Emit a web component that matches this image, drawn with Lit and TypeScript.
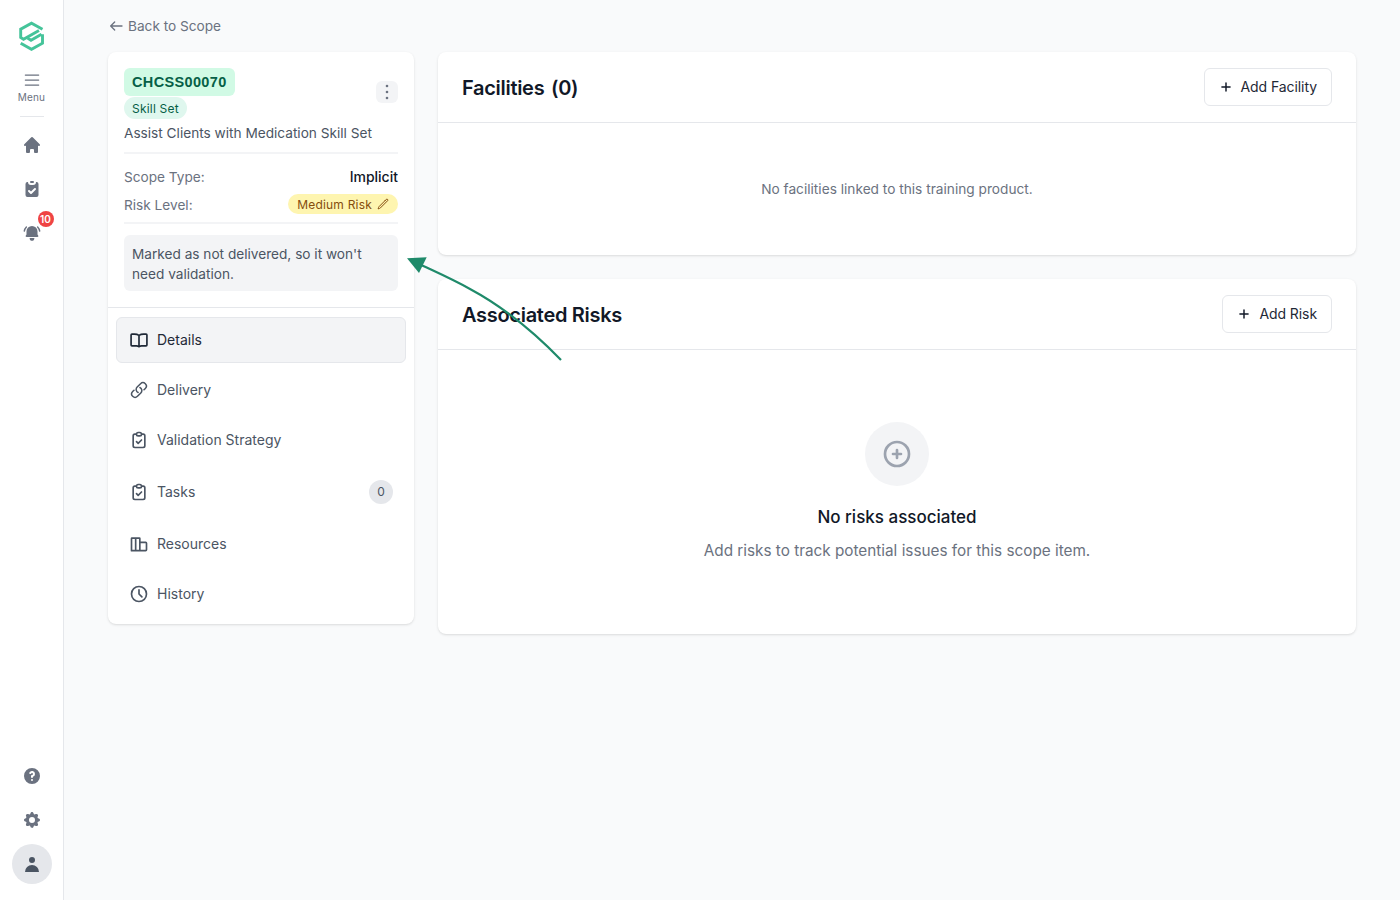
import { html, LitElement, css, svg } from 'lit';
import { customElement } from 'lit/decorators.js';

const solid = (paths: string[], size = 20) => html`<svg width=${size} height=${size} viewBox="0 0 20 20" fill="currentColor">
  ${paths.map((d) => svg`<path fill-rule="evenodd" clip-rule="evenodd" d=${d}></path>`)}
</svg>`;

const outline = (d: string, size = 20, width = 2) => html`<svg width=${size} height=${size} viewBox="0 0 24 24" fill="none" stroke="currentColor" stroke-width=${width} stroke-linecap="round" stroke-linejoin="round">
  <path d=${d}></path>
</svg>`;

const HOME = ['M10.707 2.293a1 1 0 00-1.414 0l-7 7a1 1 0 001.414 1.414L4 10.414V17a1 1 0 001 1h2a1 1 0 001-1v-2a1 1 0 011-1h2a1 1 0 011 1v2a1 1 0 001 1h2a1 1 0 001-1v-6.586l.293.293a1 1 0 001.414-1.414l-7-7z'];
const CLIP = ['M9 2a1 1 0 000 2h2a1 1 0 100-2H9z', 'M3.500 5a2 2 0 012-2H6a3 3 0 003 3h2a3 3 0 003-3h.5a2 2 0 012 2v11a2 2 0 01-2 2h-9a2 2 0 01-2-2V5zm10.207 5.707a1 1 0 00-1.414-1.414L9 12.586l-1.293-1.293a1 1 0 00-1.414 1.414l2 2a1 1 0 001.414 0l4-4z'];
const BELL = ['M10 3a5.5 5.5 0 00-5.5 5.5v3.1l-.7.9A1 1 0 004.6 14h10.8a1 1 0 00.8-1.5l-.7-.9V8.500A5.500 5.500 0 0010 3zM10 17.800a2.300 2.300 0 01-2.300-2.800h4.600a2.300 2.300 0 01-2.300 2.800z', 'M3.900 3.600a.7.7 0 011 1A7 7 0 003 8.200a.7.7 0 01-1.400-.2 8.400 8.400 0 012.300-4.400zM15.100 4.600a.7.7 0 011-1A8.400 8.400 0 0118.400 8a.7.7 0 01-1.400.2 7 7 0 00-1.900-3.600z'];
const HELP = ['M18 10a8 8 0 11-16 0 8 8 0 0116 0zm-8-3a1 1 0 00-.867.5 1 1 0 11-1.731-1A3 3 0 0113 8a3.001 3.001 0 01-2 2.830V11a1 1 0 11-2 0v-1a1 1 0 011-1 1 1 0 100-2zm0 8a1 1 0 100-2 1 1 0 000 2z'];
const COG = ['M11.490 3.170c-.380-1.560-2.600-1.560-2.980 0a1.532 1.532 0 01-2.286.948c-1.372-.836-2.942.734-2.106 2.106.540.886.061 2.042-.947 2.287-1.561.379-1.561 2.600 0 2.978a1.532 1.532 0 01.947 2.287c-.836 1.372.734 2.942 2.106 2.106a1.532 1.532 0 012.287.947c.379 1.561 2.600 1.561 2.978 0a1.533 1.533 0 012.287-.947c1.372.836 2.942-.734 2.106-2.106a1.533 1.533 0 01.947-2.287c1.561-.379 1.561-2.600 0-2.978a1.532 1.532 0 01-.947-2.287c.836-1.372-.734-2.942-2.106-2.106a1.532 1.532 0 01-2.287-.947zM10 13a3 3 0 100-6 3 3 0 000 6z'];
const USER = ['M10 9a3 3 0 100-6 3 3 0 000 6zm-7 9a7 7 0 1114 0H3z'];

const BOOK = 'M12 6.500C10.500 5.500 8.500 5 6.500 5H3.500a1 1 0 00-1 1v12a1 1 0 001 1h5.500c1.200 0 2.200.500 3 1m0-13.500C13.500 5.500 15.500 5 17.500 5h3a1 1 0 011 1v12a1 1 0 01-1 1H15c-1.200 0-2.200.500-3 1m0-13.500V20';
const LINK = 'M13.190 8.688a4.500 4.500 0 011.242 7.244l-4.500 4.500a4.500 4.500 0 01-6.364-6.364l1.757-1.757m13.350-.622l1.757-1.757a4.500 4.500 0 00-6.364-6.364l-4.500 4.500a4.500 4.500 0 001.242 7.244';
const CHECKLIST = 'M9 5H7a2 2 0 00-2 2v12a2 2 0 002 2h10a2 2 0 002-2V7a2 2 0 00-2-2h-2M9 5a2 2 0 002 2h2a2 2 0 002-2M9 5a2 2 0 012-2h2a2 2 0 012 2m-6 9l2 2 4-4';
const COLUMNS = 'M3 5.500A.500.500 0 013.500 5h4a.500.500 0 01.500.500V20H3zM8 5.500A.500.500 0 018.500 5h4a.500.500 0 01.500.500V20H8zM13 10h7a1 1 0 011 1v8a1 1 0 01-1 1h-7';
const CLOCK = 'M12 7v5l3.500 3.500M21 12a9 9 0 11-18 0 9 9 0 0118 0z';
const PLUS_CIRCLE = 'M12 9v3m0 0v3m0-3h3m-3 0H9m12 0a9 9 0 11-18 0 9 9 0 0118 0z';
const PENCIL = 'M16.862 4.487l1.687-1.688a1.875 1.875 0 112.652 2.652L6.832 19.820a4.500 4.500 0 01-1.897 1.130l-2.685.800.800-2.685a4.500 4.500 0 011.130-1.897L16.863 4.487z';
const PLUS = 'M12 5v14M5 12h14';

const NAV = [
  { label: 'Details', icon: BOOK, active: true },
  { label: 'Delivery', icon: LINK, size: 18 },
  { label: 'Validation Strategy', icon: CHECKLIST },
  { label: 'Tasks', icon: CHECKLIST, count: 0 },
  { label: 'Resources', icon: COLUMNS },
  { label: 'History', icon: CLOCK },
];

@customElement('app-root')
export class AppRoot extends LitElement {
  static styles = css`
    :host {
      display: block;
      height: 900px;
      overflow: hidden;
      position: relative;
      background: #f9fafb;
      color: #111827;
      font-family: Inter, 'Liberation Sans', sans-serif;
      font-size: 14px;
    }
    * { box-sizing: border-box; }

    .layout { display: flex; height: 100%; }

    .rail {
      width: 64px;
      flex: none;
      background: #fff;
      border-right: 1px solid #e5e7eb;
      display: flex;
      flex-direction: column;
      align-items: center;
      color: #6b7280;
    }
    .logo { margin-top: 20px; height: 32px; }
    .menu {
      margin-top: 18px;
      display: flex;
      flex-direction: column;
      align-items: center;
      font-size: 10px;
      line-height: 12px;
      letter-spacing: 0.2px;
    }
    .menu svg { display: block; margin-bottom: 1px; }
    .rail hr {
      width: 24px;
      margin: 13px 0 0;
      border: 0;
      border-top: 1px solid #e5e7eb;
    }
    .rail-links { margin-top: 18px; display: flex; flex-direction: column; gap: 24px; }
    .rail-links svg, .rail-foot svg { display: block; }
    .bell { position: relative; }
    .bell-count {
      position: absolute;
      top: -12px;
      left: 16px;
      width: 16px;
      height: 16px;
      border-radius: 50%;
      background: #ef4444;
      color: #fff;
      font-size: 10px;
      font-weight: 600;
      line-height: 16px;
      text-align: center;
    }
    .rail-foot {
      margin-top: auto;
      padding-bottom: 16px;
      display: flex;
      flex-direction: column;
      align-items: center;
      gap: 24px;
    }
    .avatar {
      width: 40px;
      height: 40px;
      margin-top: -10px;
      border-radius: 50%;
      background: #e5e7eb;
      color: #4b5563;
      display: flex;
      align-items: center;
      justify-content: center;
    }

    .main { flex: 1; padding: 16px 44px 0; min-width: 0; }
    .back {
      display: flex;
      align-items: center;
      gap: 4px;
      height: 20px;
      color: #6b7280;
      font-size: 13.65px;
    }
    .columns { display: flex; gap: 24px; margin-top: 16px; align-items: flex-start; }

    .card {
      background: #fff;
      border-radius: 8px;
      box-shadow: 0 1px 3px rgba(0, 0, 0, 0.1), 0 1px 2px -1px rgba(0, 0, 0, 0.1);
    }
    .side { width: 306px; flex: none; }
    .summary { padding: 16px; border-bottom: 1px solid #e5e7eb; }
    .summary-top { display: flex; align-items: center; justify-content: space-between; }
    .code {
      display: inline-block;
      padding: 4px 8px;
      border-radius: 6px;
      background: #d1fae5;
      color: #065f46;
      font-family: 'Liberation Sans', Arial, sans-serif;
      font-size: 14.5px;
      font-weight: 700;
      line-height: 20px;
      letter-spacing: 0.35px;
    }
    .kind {
      display: block;
      width: max-content;
      margin-top: 1px;
      padding: 1px 8px 0;
      height: 22px;
      line-height: 22px;
      border-radius: 11px;
      background: #dff7ee;
      color: #065f46;
      font-size: 12px;
      letter-spacing: 0.2px;
    }
    .more {
      width: 22px;
      height: 22px;
      margin-bottom: 3px;
      border-radius: 6px;
      background: #f3f4f6;
      color: #6b7280;
      display: flex;
      align-items: center;
      justify-content: center;
    }
    .title { margin-top: 4px; color: #4b5563; line-height: 20px; font-size: 13.65px; }
    .rule { border-top: 2px solid #f3f4f6; }
    .rule.first { margin-top: 9px; }
    .rule.second { margin-top: 8px; }
    .meta { display: flex; align-items: center; justify-content: space-between; color: #6b7280; font-size: 13.65px; }
    .meta-label { padding-top: 2px; }
    .meta strong { color: #111827; font-weight: 500; font-size: 14px; }
    .meta.scope { margin-top: 12px; height: 20px; }
    .meta.risk { margin-top: 8px; height: 20px; }
    .risk-pill {
      display: flex;
      align-items: center;
      gap: 5px;
      height: 20px;
      padding: 0 9px;
      border-radius: 10px;
      background: #fef5b0;
      color: #854d0e;
      font-size: 12px;
      letter-spacing: 0.2px;
    }
    .note {
      margin-top: 11px;
      padding: 9px 8px 7px;
      height: 56px;
      border-radius: 6px;
      background: #f3f4f6;
      color: #4b5563;
      line-height: 20px;
      font-size: 13.65px;
    }

    .nav { padding: 9px 8px 7px; display: flex; flex-direction: column; gap: 4px; }
    .nav-item {
      display: flex;
      align-items: center;
      gap: 8px;
      height: 46px;
      padding: 0 12px;
      border: 1px solid transparent;
      border-radius: 6px;
      color: #4b5563;
    }
    .nav-item.active { background: #f3f4f6; border-color: #e5e7eb; color: #1f2937; }
    .nav-item.counted { height: 50px; }
    .nav-item svg { flex: none; }
    .nav-icon { width: 20px; display: flex; justify-content: center; }
    .nav-label { padding-bottom: 2px; }
    .count {
      margin-left: auto;
      width: 24px;
      height: 24px;
      border-radius: 50%;
      background: #e5e7eb;
      font-size: 12px;
      line-height: 24px;
      text-align: center;
    }

    .content { flex: 1; min-width: 0; display: flex; flex-direction: column; gap: 24px; }
    .card-head {
      height: 71px;
      padding: 16px 24px;
      display: flex;
      align-items: center;
      justify-content: space-between;
      border-bottom: 1px solid #e5e7eb;
    }
    .card-head h2 { margin: 2px 0 0; font-size: 20px; font-weight: 600; line-height: 28px; letter-spacing: -0.3px; }
    .tally { margin-left: 2px; }
    .add {
      display: flex;
      align-items: center;
      gap: 8px;
      height: 38px;
      padding: 0 14px 2px;
      border: 1px solid #e5e7eb;
      border-radius: 6px;
      background: #fff;
      color: #1f2937;
      font: inherit;
      letter-spacing: -0.08px;
    }
    .add svg { margin-top: 2px; color: #111827; }
    .facilities-body {
      height: 132px;
      display: flex;
      align-items: center;
      justify-content: center;
      color: #6b7280;
      font-size: 13.7px;
    }
    .risks-body {
      height: 284px;
      padding-top: 72px;
      display: flex;
      flex-direction: column;
      align-items: center;
    }
    .empty-icon {
      width: 64px;
      height: 64px;
      border-radius: 50%;
      background: #f3f4f6;
      color: #9ca3af;
      display: flex;
      align-items: center;
      justify-content: center;
    }
    .risks-body h3 { margin: 18px 0 0; font-size: 17px; font-weight: 500; line-height: 26px; }
    .risks-body p { margin: 9px 0 0; font-size: 15.3px; line-height: 24px; color: #6b7280; }

    .arrow { position: absolute; left: 400px; top: 250px; pointer-events: none; }
  `;

  render() {
    return html`
      <div class="layout">
        <aside class="rail">
          <div class="logo">
            <svg width="28" height="32" viewBox="0 0 28 32" fill="none" stroke="#45c49a" stroke-width="2.900" stroke-linejoin="miter">
              <path d="M24.500 9.200 13.500 3.200 2.700 9.200V17.500L5.500 19.200 21 10.500"></path>
              <path d="M2.700 23.200 13.500 29.300 24.500 23.200V14.200"></path>
              <path d="M9.500 18l3.500 2.200 10.500-6"></path>
            </svg>
          </div>
          <div class="menu">
            ${outline('M4 6h16M4 12h16M4 18h16', 20, 1.500)}
            Menu
          </div>
          <hr />
          <div class="rail-links">
            ${solid(HOME)}
            ${solid(CLIP)}
            <div class="bell">${solid(BELL)}<span class="bell-count">10</span></div>
          </div>
          <div class="rail-foot">
            ${solid(HELP)}
            ${solid(COG)}
            <div class="avatar">${solid(USER)}</div>
          </div>
        </aside>

        <main class="main">
          <div class="back">
            <svg width="16" height="16" viewBox="0 0 24 24" fill="none" stroke="currentColor" stroke-width="2" stroke-linecap="round" stroke-linejoin="round"><path d="M21 12H4M10 6l-6 6 6 6"></path></svg>
            Back to Scope
          </div>
          <div class="columns">
            <section class="card side">
              <div class="summary">
                <div class="summary-top">
                  <div>
                    <span class="code">CHCSS00070</span>
                    <span class="kind">Skill Set</span>
                  </div>
                  <div class="more">
                    <svg width="16" height="16" viewBox="0 0 16 16" fill="currentColor">
                      <circle cx="8" cy="2" r="1.300"></circle>
                      <circle cx="8" cy="8" r="1.300"></circle>
                      <circle cx="8" cy="14" r="1.300"></circle>
                    </svg>
                  </div>
                </div>
                <div class="title">Assist Clients with Medication Skill Set</div>
                <div class="rule first"></div>
                <div class="meta scope"><span class="meta-label">Scope Type:</span><strong>Implicit</strong></div>
                <div class="meta risk">
                  <span class="meta-label">Risk Level:</span>
                  <span class="risk-pill">Medium Risk ${outline(PENCIL, 12, 2)}</span>
                </div>
                <div class="rule second"></div>
                <div class="note">Marked as not delivered, so it won't need validation.</div>
              </div>
              <nav class="nav">
                ${NAV.map((item) => html`
                  <div class="nav-item ${item.active ? 'active' : ''} ${item.count !== undefined ? 'counted' : ''}">
                    <span class="nav-icon">${outline(item.icon, item.size ?? 20)}</span>
                    <span class="nav-label">${item.label}</span>
                    ${item.count !== undefined ? html`<span class="count">${item.count}</span>` : ''}
                  </div>
                `)}
              </nav>
            </section>

            <div class="content">
              <section class="card">
                <div class="card-head">
                  <h2>Facilities <span class="tally">(0)</span></h2>
                  <button class="add">${outline(PLUS, 14, 2.500)} Add Facility</button>
                </div>
                <div class="facilities-body">No facilities linked to this training product.</div>
              </section>
              <section class="card">
                <div class="card-head">
                  <h2>Associated Risks</h2>
                  <button class="add">${outline(PLUS, 14, 2.500)} Add Risk</button>
                </div>
                <div class="risks-body">
                  <div class="empty-icon">${outline(PLUS_CIRCLE, 32, 2)}</div>
                  <h3>No risks associated</h3>
                  <p>Add risks to track potential issues for this scope item.</p>
                </div>
              </section>
            </div>
          </div>
        </main>
      </div>

      <svg class="arrow" width="170" height="120" viewBox="400 250 170 120" fill="none">
        <path d="M561 360C530 328 498 304 470 289C452 279 436 272 419 264" stroke="#1f8a6a" stroke-width="2.200"></path>
        <path d="M407 258.300 426.700 257.300 419 273z" fill="#1f8a6a"></path>
      </svg>
    `;
  }
}
